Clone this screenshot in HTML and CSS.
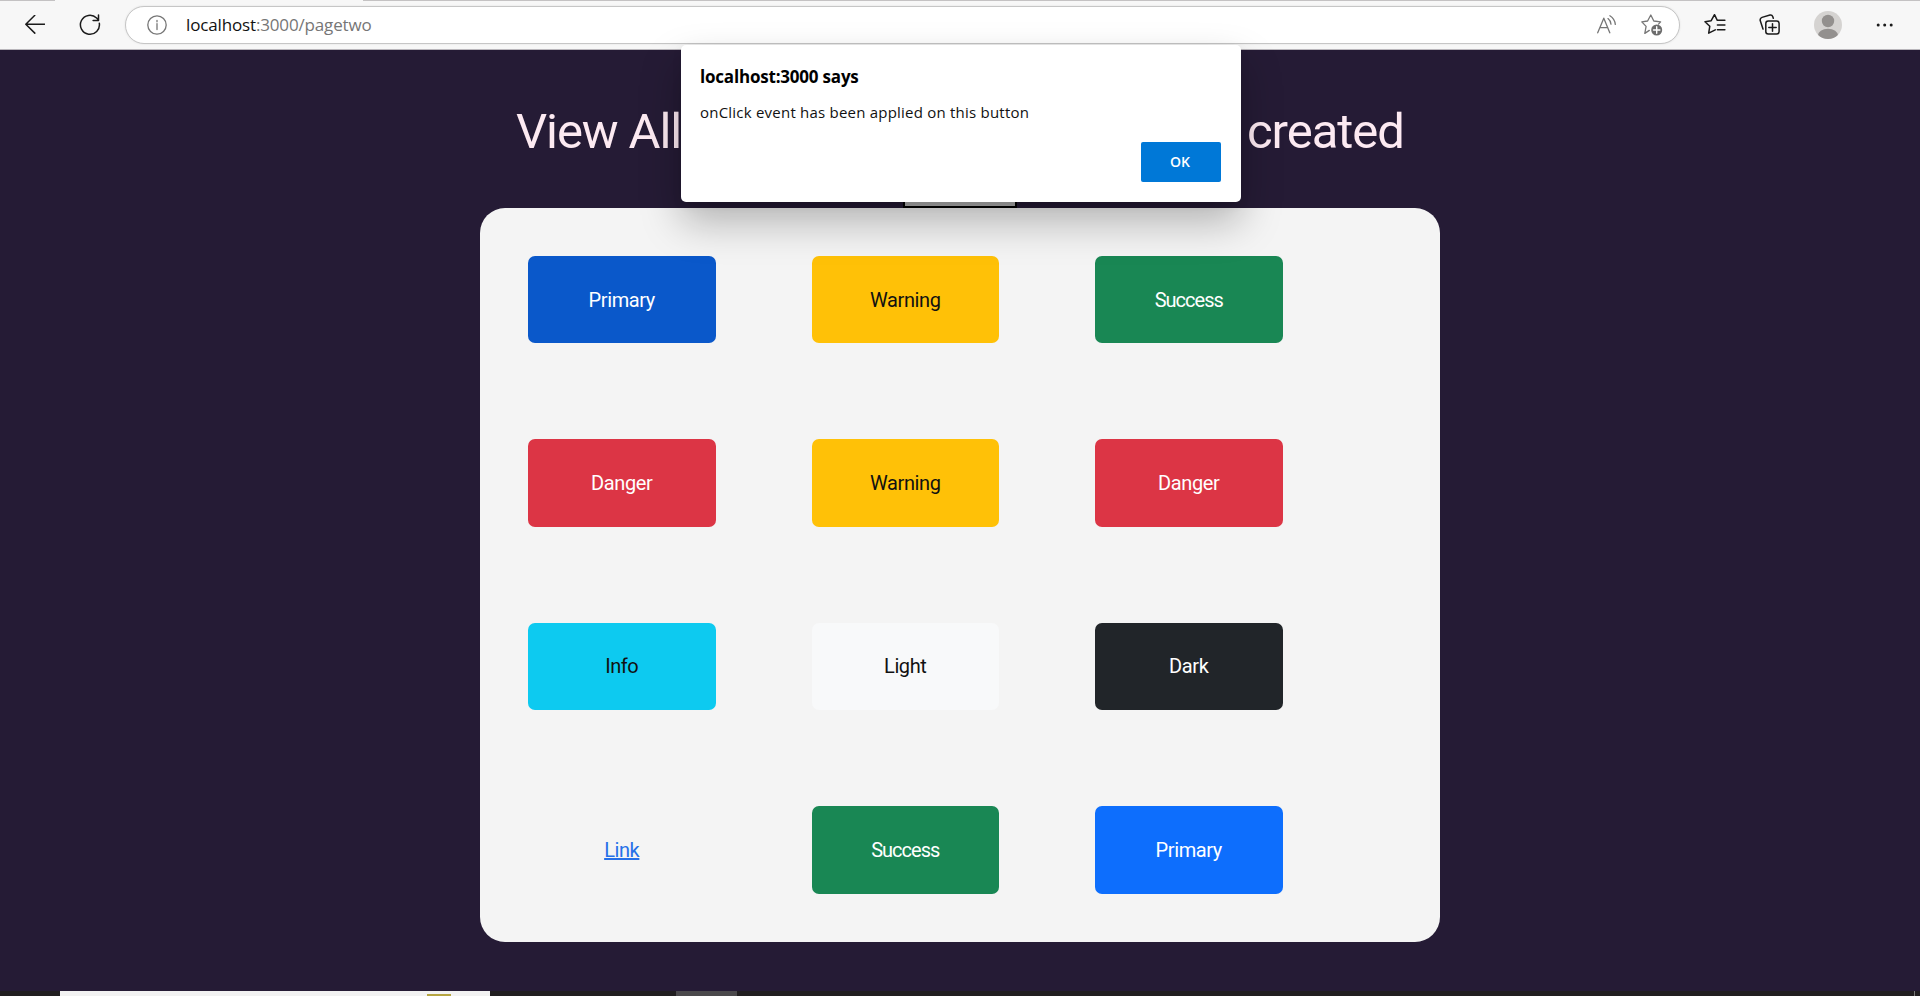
FILE: index.html
```html
<!DOCTYPE html>
<html lang="en">
<head>
<meta charset="utf-8">
<title>localhost:3000/pagetwo</title>
<link rel="stylesheet" href="styles.css">
</head>
<body>
<header class="toolbar">
  <svg class="ico back" width="20" height="20" viewBox="0 0 20 20"><path d="M19.6 9.2H.9M9.8.3.8 9.2l9 8.9"/></svg>
  <svg class="ico reload" width="22" height="22" viewBox="0 0 22 22"><path d="M20.3 9.2A9.5 9.5 0 1 1 17.6 4L19.3 5.8M19.5 1v5.4h-5.4"/></svg>
  <div class="address">
    <svg class="ico info" width="20" height="20" viewBox="0 0 20 20"><circle cx="10" cy="10" r="9.2"/><path d="M10 8.6v5.9M10 5.3v1.5"/></svg>
    <div class="url"><span class="host">localhost</span>:3000/pagetwo</div>
    <svg class="ico read" width="20" height="20" viewBox="0 0 20 20"><path d="M.7 17.8 6.8 3.2l6 14.6M3 12.6h7.8M11 3.6a8 8 0 0 1 3 5.6M12.9.8a11.6 11.6 0 0 1 5.4 8.6"/></svg>
    <svg class="ico addfav" width="22" height="22" viewBox="0 0 22 22"><path d="m8.3 16.4-4.5 3 1.3-7L.8 7.9l5.8-.9 3.2-6 3 6 6.8.9-2.1 2.2"/><circle class="solid" cx="15.7" cy="16" r="5.5"/><path class="plus" d="M15.7 12.8v6.4M12.5 16h6.4"/></svg>
  </div>
  <svg class="ico favs" width="22" height="22" viewBox="0 0 22 22"><path d="m11.3 15.8-6.6 3.4 1.1-7L1 7.7l6.2-1 3.3-6 2.8 5.6h7.6M13.4 11h7.5M13.4 15.8h7.5"/></svg>
  <svg class="ico coll" width="22" height="22" viewBox="0 0 22 22"><rect x="6.8" y="7" width="13.3" height="13" rx="2.5"/><path d="M13.5 9.8v7.4M9.8 13.5h7.4M4 15.1 1.2 6.6Q.8 4.2 3 3.4l8-2.4q2-.4 2.7 1.4l.6 1.8"/></svg>
  <svg class="avatar" width="28" height="28" viewBox="0 0 28 28"><defs><clipPath id="disc"><circle cx="14" cy="14" r="14"/></clipPath></defs><circle cx="14" cy="14" r="14" fill="#d5d3d1"/><g fill="#93908e" clip-path="url(#disc)"><circle cx="14" cy="10" r="6.2"/><ellipse cx="14" cy="25" rx="10.2" ry="7.3"/></g></svg>
  <svg class="dots" width="18" height="4" viewBox="0 0 18 4"><circle cx="2.2" cy="2" r="1.5"/><circle cx="8.7" cy="2" r="1.5"/><circle cx="15.2" cy="2" r="1.5"/></svg>
  <div class="tab-edge"></div>
</header>

<main class="page">
  <h1 class="title"><span class="t-left">View All</span><span class="t-right">created</span></h1>
  <div class="box"></div>
  <section class="card">
    <button class="btn primary active">Primary</button>
    <button class="btn warning">Warning</button>
    <button class="btn success">Success</button>
    <button class="btn danger">Danger</button>
    <button class="btn warning">Warning</button>
    <button class="btn danger">Danger</button>
    <button class="btn info-b">Info</button>
    <button class="btn light">Light</button>
    <button class="btn dark">Dark</button>
    <button class="btn link">Link</button>
    <button class="btn success">Success</button>
    <button class="btn primary">Primary</button>
  </section>
</main>

<footer class="taskbar"><div class="search"><i class="art"></i></div><div class="app"></div><div class="edge"></div></footer>

<div class="dialog" role="alertdialog">
  <div class="d-title">localhost:3000 says</div>
  <div class="d-msg">onClick event has been applied on this button</div>
  <button class="ok">OK</button>
</div>
</body>
</html>
```

FILE: styles.css
```css
* { box-sizing: border-box; }
body {
  margin: 0;
  height: 996px;
  overflow: hidden;
  display: flex;
  flex-direction: column;
  background: #251b35;
  font-family: "Open Sans", "Noto Sans", sans-serif;
}

/* Browser toolbar */
.toolbar {
  position: relative;
  height: 50px;
  flex: none;
  display: flex;
  align-items: center;
  padding-left: 25px;
  background: #f7f7f7;
  border-top: 1px solid #c4c2c3;
  border-bottom: 1px solid #b9b6bb;
}
.tab-edge { position: absolute; left: 55px; top: -1px; width: 308px; height: 1px; background: #f7f7f7; }
.ico { flex: none; fill: none; stroke: #1b1b1b; stroke-width: 1.5; stroke-linecap: round; stroke-linejoin: round; }
.reload { margin-left: 34px; }
.address {
  width: 1555px;
  height: 38px;
  margin-left: 24px;
  display: flex;
  align-items: center;
  padding: 0 16px 0 21px;
  background: #fff;
  border: 1px solid #c6c6c6;
  border-radius: 19px;
  box-shadow: 0 0 2px #ddd;
}
.address .ico { stroke: #767676; stroke-width: 1.3; }
.url { margin: 0 0 2px 19px; flex: 1; font-size: 17px; letter-spacing: -0.15px; color: #767676; white-space: nowrap; }
.host { color: #111; }
.addfav { margin-left: 24px; }
.addfav .solid { fill: #6d6d6d; stroke: none; }
.address .ico .plus { stroke: #fff; stroke-width: 1.4; }
.favs { margin-left: 24px; }
.coll { margin-left: 33px; }
.avatar { margin-left: 33px; }
.dots { margin-left: 34px; fill: #1b1b1b; }

/* Page */
.page { flex: 1; display: flex; flex-direction: column; align-items: center; font-family: Roboto, sans-serif; }
.title {
  width: 888px;
  height: 60px;
  margin: 52px 0 0;
  display: flex;
  justify-content: space-between;
  font-size: 49px;
  line-height: 60px;
  font-weight: 400;
  color: #fdeaf2;
}
.t-left { letter-spacing: -1.1px; }
.t-right { letter-spacing: -1px; }
.box { width: 114px; height: 46px; background: #b4b4b4; border: 2px solid #000; }
.card {
  width: 960px;
  height: 734px;
  padding: 48px;
  display: grid;
  grid-template-columns: repeat(3, 187.5px);
  grid-auto-rows: 87.4px;
  gap: 96px;
  background: #f4f4f4;
  border-radius: 25px;
}
.btn { border: 0; border-radius: 7px; padding: 0; color: #fff; font: 400 20px/30px Roboto, sans-serif; letter-spacing: -0.4px; }
.primary { background: #0d6efd; }
.primary.active { background: #0a58ca; }
.warning { background: #ffc107; color: #111; }
.success { background: #198754; letter-spacing: -1px; }
.danger { background: #dc3545; }
.info-b { background: #0dcaf0; color: #111; }
.light { background: #f8f9fa; color: #111; }
.dark { background: #212529; }
.link { background: none; color: #2670e8; text-decoration: underline; }

/* Desktop taskbar strip */
.taskbar { height: 5px; flex: none; display: flex; background: #211e20; }
.search { width: 430px; margin-left: 60px; background: #f2f2f2; padding: 3px 0 0 367px; }
.art { display: block; width: 24px; height: 2px; background: #b6a542; }
.app { width: 61px; margin-left: 186px; background: #4b494c; }
.edge { width: 1px; margin-left: auto; margin-right: 5px; background: #777; }

/* Alert */
.dialog {
  position: absolute;
  left: 681px;
  top: 45px;
  width: 560px;
  height: 157px;
  padding: 19px 20px 20px 19px;
  display: flex;
  flex-direction: column;
  background: #fff;
  border-radius: 5px;
  box-shadow: 0 20px 40px rgba(0,0,0,.27), 0 3px 10px rgba(0,0,0,.08);
  color: #111;
}
.d-title { font-size: 17px; line-height: 26px; font-weight: 700; letter-spacing: -0.2px; color: #000; }
.d-msg { margin-top: 11px; font-size: 15px; line-height: 22px; letter-spacing: 0.22px; }
.ok {
  width: 80px;
  height: 40px;
  margin: auto 0 0 auto;
  padding: 0 2px 2px 0;
  border: 0;
  border-radius: 2px;
  background: #0078d7;
  color: #fff;
  font: 600 14px "Open Sans", sans-serif;
}
```
